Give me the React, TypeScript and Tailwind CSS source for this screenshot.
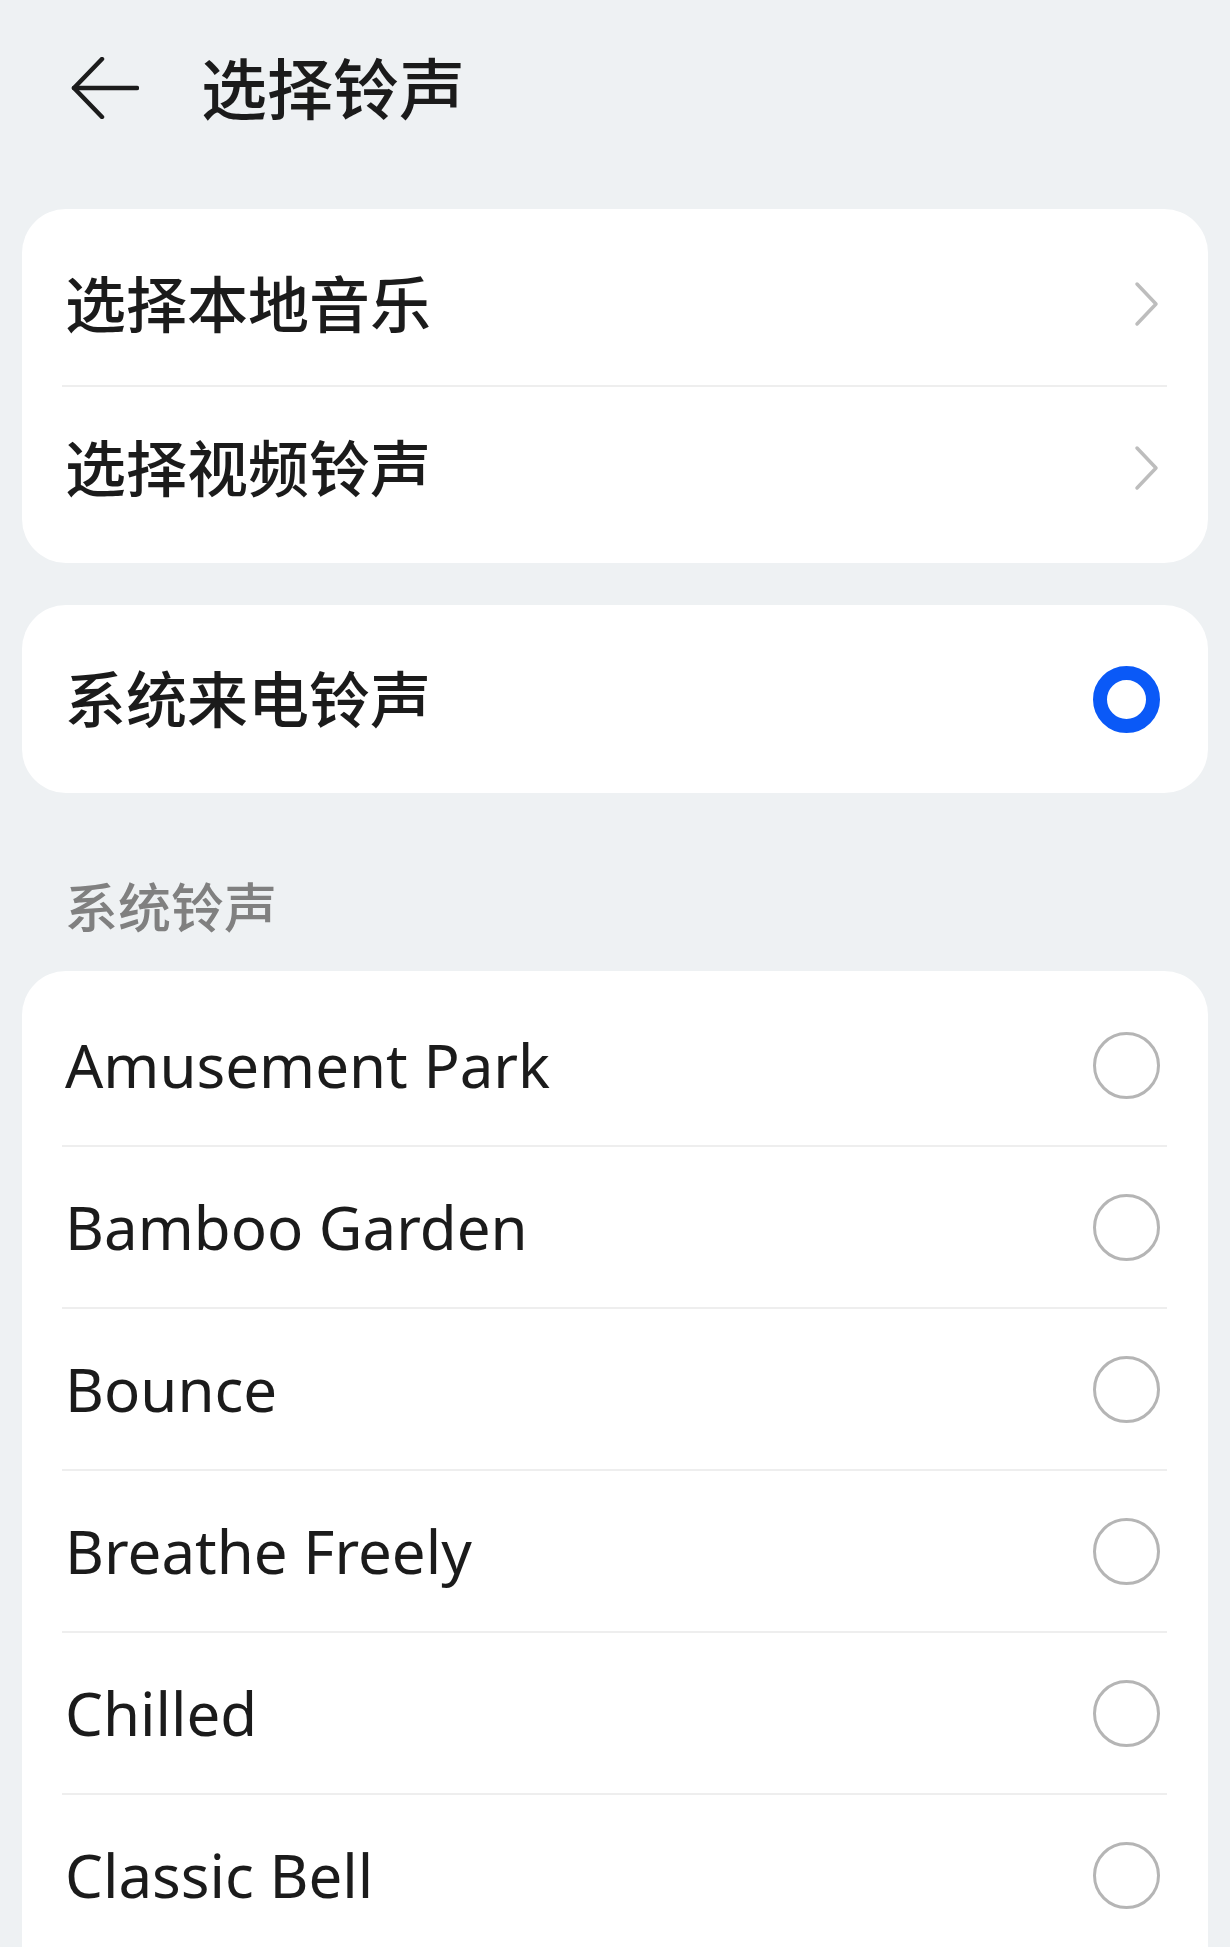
import { useState } from "react";

const FONT = "font-['Noto_Sans','Noto_Sans_CJK_SC',sans-serif]";

const ringtones = [
    "Amusement Park",
    "Bamboo Garden",
    "Bounce",
    "Breathe Freely",
    "Chilled",
    "Classic Bell",
];

/** 戻る矢印 */
function BackArrow() {
    return (
        <svg width="68" height="62" viewBox="0 0 68 62" fill="none">
            <path d="M31 2 L3 31 L31 60" stroke="#1c1c1c" strokeWidth="4.5" strokeLinecap="round" strokeLinejoin="round" />
            <path d="M3 31 H66" stroke="#1c1c1c" strokeWidth="4.5" strokeLinecap="round" />
        </svg>
    );
}

function Chevron() {
    return (
        <svg width="26" height="46" viewBox="0 0 26 46" fill="none">
            <path d="M3 3 L22 23 L3 43" stroke="#bdbdbd" strokeWidth="3.5" strokeLinecap="round" strokeLinejoin="round" />
        </svg>
    );
}

function Radio({ checked }: { checked: boolean }) {
    if (checked) {
        return <div className="w-[67px] h-[67px] rounded-full border-[14px] border-[#0a59f7] bg-white" />;
    }
    return <div className="w-[67px] h-[67px] rounded-full border-[3px] border-[#b5b5b5] bg-white" />;
}

function Divider() {
    return <div className="h-[2px] bg-[#eeeeee] ml-[40px] mr-[41px]" />;
}

type RowProps = {
    label: string;
    right: React.ReactNode;
    cjk?: boolean;
    tall?: boolean;
    onClick?: () => void;
};

function Row({ label, right, cjk, tall, onClick }: RowProps) {
    return (
        <div
            className={`${tall ? "h-[162px]" : "h-[160px]"} flex items-center justify-between pl-[43px] pr-[48px] cursor-pointer`}
            onClick={onClick}
        >
            <span className={cjk ? "text-[61px] leading-none font-medium text-[#1b1b1b]" : "text-[60px] leading-none text-[#1b1b1b]"}>
                {label}
            </span>
            {right}
        </div>
    );
}

export default function App() {
    const [selected, setSelected] = useState<string>("system");

    return (
        <div className={`${FONT} w-[1230px] h-[1947px] overflow-hidden bg-[#eef1f3] px-[22px]`}>
            {/* ヘッダー */}
            <div className="h-[176px] flex items-center pl-[49px]">
                <BackArrow />
                <span className="ml-[62px] text-[66px] leading-none font-medium text-[#1b1b1b]">选择铃声</span>
            </div>

            <div className="mt-[33px] bg-white rounded-[44px] py-[14px]">
                <Row label="选择本地音乐" cjk tall right={<Chevron />} />
                <Divider />
                <Row label="选择视频铃声" cjk tall right={<Chevron />} />
            </div>

            <div className="mt-[42px] bg-white rounded-[44px] py-[13px]">
                <Row
                    label="系统来电铃声"
                    cjk
                    tall
                    right={<Radio checked={selected === "system"} />}
                    onClick={() => setSelected("system")}
                />
            </div>

            <div className="h-[178px] flex items-end pb-[37px] pl-[43px]">
                <span className="text-[53px] leading-none font-medium text-[#808080]">系统铃声</span>
            </div>

            <div className="bg-white rounded-t-[44px] pt-[14px] pb-[40px]">
                {ringtones.map((name, i) => (
                    <div key={name}>
                        {i > 0 && <Divider />}
                        <Row
                            label={name}
                            right={<Radio checked={selected === name} />}
                            onClick={() => setSelected(name)}
                        />
                    </div>
                ))}
            </div>
        </div>
    );
}
